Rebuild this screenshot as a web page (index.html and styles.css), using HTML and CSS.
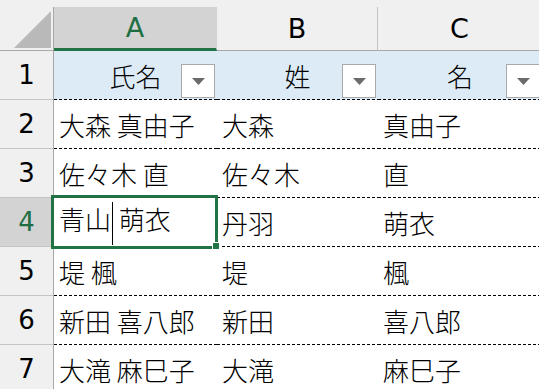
FILE: index.html
```html
<!DOCTYPE html>
<html lang="ja">
<head>
  <meta charset="UTF-8">
  <title>氏名</title>
  <link rel="stylesheet" href="styles.css">
</head>
<body>
  <div class="top-strip"></div>
  <div class="sheet">
    <!-- column headers -->
    <div class="corner">
      <svg width="37" height="37" viewBox="0 0 37 37"><polygon points="37,0 37,37 0,37" fill="#b9b9b9"/></svg>
    </div>
    <div class="col-head selected">A</div>
    <div class="col-head">B</div>
    <div class="col-head">C</div>

    <!-- row 1: table header -->
    <div class="row-head">1</div>
    <div class="cell title">氏名<span class="filter"><svg width="13" height="7" viewBox="0 0 13 7"><polygon points="0,0 13,0 6.5,7" fill="#6b6b6b"/></svg></span></div>
    <div class="cell title">姓<span class="filter"><svg width="13" height="7" viewBox="0 0 13 7"><polygon points="0,0 13,0 6.5,7" fill="#6b6b6b"/></svg></span></div>
    <div class="cell title">名<span class="filter"><svg width="13" height="7" viewBox="0 0 13 7"><polygon points="0,0 13,0 6.5,7" fill="#6b6b6b"/></svg></span></div>

    <div class="row-head">2</div>
    <div class="cell"><span>大森 真由子</span></div>
    <div class="cell"><span>大森</span></div>
    <div class="cell"><span>真由子</span></div>

    <div class="row-head">3</div>
    <div class="cell"><span>佐々木 直</span></div>
    <div class="cell"><span>佐々木</span></div>
    <div class="cell"><span>直</span></div>

    <div class="row-head selected">4</div>
    <div class="cell active"><span>青山<span class="caret"></span> 萌衣</span><span class="handle"></span></div>
    <div class="cell"><span>丹羽</span></div>
    <div class="cell"><span>萌衣</span></div>

    <div class="row-head">5</div>
    <div class="cell"><span>堤 楓</span></div>
    <div class="cell"><span>堤</span></div>
    <div class="cell"><span>楓</span></div>

    <div class="row-head">6</div>
    <div class="cell"><span>新田 喜八郎</span></div>
    <div class="cell"><span>新田</span></div>
    <div class="cell"><span>喜八郎</span></div>

    <div class="row-head">7</div>
    <div class="cell"><span>大滝 麻巳子</span></div>
    <div class="cell"><span>大滝</span></div>
    <div class="cell"><span>麻巳子</span></div>
  </div>
</body>
</html>
```

FILE: styles.css
```css
body {
  margin: 0;
  background: #fff;
  overflow: hidden;
  font-family: "Noto Sans CJK JP", sans-serif;
}

.top-strip {
  height: 7px;
  background: #f0f0f0;
}

.sheet {
  display: grid;
  grid-template-columns: 54px 163px 161px 164px;
  grid-template-rows: 44px;
  grid-auto-rows: 49px;
}

.corner {
  display: flex;
  justify-content: flex-end;
  align-items: flex-end;
  padding: 0 2px 2px 0;
  background: #f0f0f0;
  border-right: 1px solid #a8a8a8;
  border-bottom: 1px solid #a8a8a8;
}

.col-head {
  display: flex;
  align-items: center;
  justify-content: center;
  background: #f0f0f0;
  border-right: 1px solid #c4c4c4;
  border-bottom: 1px solid #a8a8a8;
  font-family: "DejaVu Sans", sans-serif;
  font-size: 27px;
  color: #000;
}

.col-head.selected {
  background: #d3d3d3;
  color: #1f6e43;
  border-right-color: #d3d3d3;
  border-bottom: 3px solid #217346;
}

.row-head {
  display: flex;
  align-items: center;
  justify-content: center;
  background: #f0f0f0;
  border-right: 1px solid #a8a8a8;
  border-bottom: 1px solid #c4c4c4;
  font-family: "DejaVu Sans", sans-serif;
  font-size: 26px;
  color: #000;
}

.row-head.selected {
  background: #d3d3d3;
  color: #1f6e43;
}

.cell {
  position: relative;
  display: flex;
  align-items: center;
  padding-left: 5px;
  font-size: 26px;
  font-weight: 300;
  color: #000;
  background-image: repeating-linear-gradient(to right, #000 0 3px, transparent 3px 5px);
  background-size: 100% 1px;
  background-position: bottom;
  background-repeat: no-repeat;
}

.cell.title {
  justify-content: center;
  padding-left: 0;
  background-color: #ddebf7;
}

.filter {
  position: absolute;
  right: 2px;
  bottom: 2px;
  width: 32px;
  height: 32px;
  display: flex;
  align-items: center;
  justify-content: center;
  background: #fff;
  border: 1px solid #a9a9a9;
}

.caret {
  display: inline-block;
  width: 1px;
  height: 43px;
  margin-left: 1px;
  background: #000;
  vertical-align: middle;
}

.cell.active::after {
  content: "";
  position: absolute;
  left: -3px;
  top: -3px;
  right: -1px;
  bottom: -2px;
  border: 3px solid #217346;
  z-index: 2;
}

.handle {
  position: absolute;
  right: -3px;
  bottom: -3px;
  width: 6px;
  height: 6px;
  background: #217346;
  border: 1px solid #fff;
  z-index: 3;
}
```
